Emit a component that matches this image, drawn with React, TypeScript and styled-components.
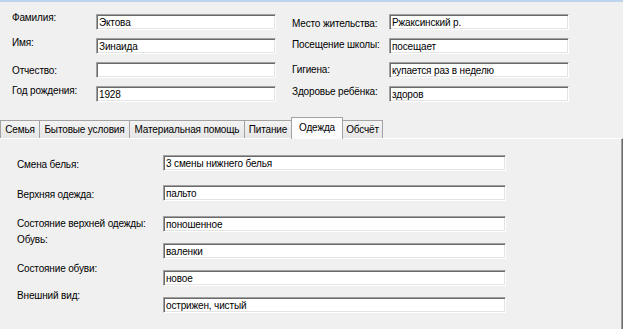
import React from 'react';
import styled, { createGlobalStyle } from 'styled-components';

const GlobalStyle = createGlobalStyle`
    body {
        margin: 0;
        background: #f0f0f0;
        font-family: "Liberation Sans", Arial, sans-serif;
        font-size: 10px;
        letter-spacing: -0.15px;
        color: #000;
    }
`

const Window = styled.div`
    width: 623px;
    height: 329px;
    box-sizing: border-box;
    overflow: hidden;
    border-top: 2px solid #bcd4ec;
    display: flex;
    flex-direction: column;
`
const Header = styled.section`
    display: flex;
    gap: 16px;
    height: 115px;
    box-sizing: border-box;
    padding: 12px 0 0 12px;
`
const FieldColumn = styled.div<{ $labelWidth: number }>`
    display: grid;
    grid-template-columns: ${p => p.$labelWidth}px 180px;
    grid-auto-rows: 16px;
    row-gap: 8px;
`
const Label = styled.span<{ $shift: number }>`
    align-self: start;
    margin-top: ${p => p.$shift}px;
    line-height: 13px;
    white-space: nowrap;
`
const TextBox = styled.input`
    width: 100%;
    height: 16px;
    box-sizing: border-box;
    margin: 0;
    padding: 1px 2px 0;
    font: inherit;
    letter-spacing: inherit;
    color: #000;
    background: #fff;
    border: 1px solid;
    border-color: #a0a0a0 #fff #fff #a0a0a0;
    box-shadow: inset 1px 1px 0 #6a6a6a, inset -1px -1px 0 #e3e3e3;
    outline: none;
`
const TabStrip = styled.nav`
    position: relative;
    z-index: 1;
    display: flex;
    align-items: flex-end;
    height: 22px;
    margin-bottom: -1px;
`
const Tab = styled.div<{ $width: number; $active?: boolean }>`
    width: ${p => p.$width}px;
    box-sizing: border-box;
    height: ${p => (p.$active ? 22 : 18)}px;
    margin-bottom: ${p => (p.$active ? 0 : 1)}px;
    margin-left: -1px;
    display: flex;
    align-items: center;
    justify-content: center;
    padding-bottom: ${p => (p.$active ? 3 : 0)}px;
    white-space: nowrap;
    border: 1px solid #a3a3a3;
    border-bottom: none;
    background: ${p => (p.$active ? '#fcfcfc' : 'linear-gradient(#f3f3f3, #e6e6e6)')};

    &:first-child {
        margin-left: 0;
    }
`
const Panel = styled.main`
    flex: 1;
    box-sizing: border-box;
    border-top: 1px solid #fff;
    border-right: 1px solid #6a6a6a;
    box-shadow: inset -1px 0 0 #a0a0a0;
    padding: 16px 0 0 17px;
    display: flex;
    flex-direction: column;
`
const Row = styled.div<{ $gap: number }>`
    display: grid;
    grid-template-columns: 146px 343px;
    height: 16px;
    margin-top: ${p => p.$gap}px;
`

const personLeft = [
    { label: 'Фамилия:', value: 'Эктова', shift: -3 },
    { label: 'Имя:', value: 'Зинаида', shift: -2 },
    { label: 'Отчество:', value: '', shift: 2 },
    { label: 'Год рождения:', value: '1928', shift: -2 },
]

const personRight = [
    { label: 'Место жительства:', value: 'Ржаксинский р.', shift: 3 },
    { label: 'Посещение школы:', value: 'посещает', shift: 0 },
    { label: 'Гигиена:', value: 'купается раз в неделю', shift: 1 },
    { label: 'Здоровье ребёнка:', value: 'здоров', shift: -1 },
]

const tabs = [
    { title: 'Семья', width: 40 },
    { title: 'Бытовые условия', width: 91 },
    { title: 'Материальная помощь', width: 116 },
    { title: 'Питание', width: 48 },
    { title: 'Одежда', width: 52, active: true },
    { title: 'Обсчёт', width: 41 },
]

const clothes = [
    { label: 'Смена белья:', value: '3 смены нижнего белья', gap: 0, shift: 3 },
    { label: 'Верхняя одежда:', value: 'пальто', gap: 14, shift: 3 },
    { label: 'Состояние верхней одежды:', value: 'поношенное', gap: 15, shift: 1 },
    { label: 'Обувь:', value: 'валенки', gap: 11, shift: -10 },
    { label: 'Состояние обуви:', value: 'новое', gap: 11, shift: -8 },
    { label: 'Внешний вид:', value: 'острижен, чистый', gap: 11, shift: -8 },
]

function App(): JSX.Element {
    return (
        <>
            <GlobalStyle />
            <Window>
                <Header>
                    <FieldColumn $labelWidth={84}>
                        {personLeft.map(f => (
                            <React.Fragment key={f.label}>
                                <Label $shift={f.shift}>{f.label}</Label>
                                <TextBox readOnly value={f.value} />
                            </React.Fragment>
                        ))}
                    </FieldColumn>
                    <FieldColumn $labelWidth={97}>
                        {personRight.map(f => (
                            <React.Fragment key={f.label}>
                                <Label $shift={f.shift}>{f.label}</Label>
                                <TextBox readOnly value={f.value} />
                            </React.Fragment>
                        ))}
                    </FieldColumn>
                </Header>
                <TabStrip>
                    {tabs.map(t => (
                        <Tab key={t.title} $width={t.width} $active={t.active}>
                            {t.title}
                        </Tab>
                    ))}
                </TabStrip>
                <Panel>
                    {clothes.map(f => (
                        <Row key={f.label} $gap={f.gap}>
                            <Label $shift={f.shift}>{f.label}</Label>
                            <TextBox readOnly value={f.value} />
                        </Row>
                    ))}
                </Panel>
            </Window>
        </>
    )
}

export default App;
